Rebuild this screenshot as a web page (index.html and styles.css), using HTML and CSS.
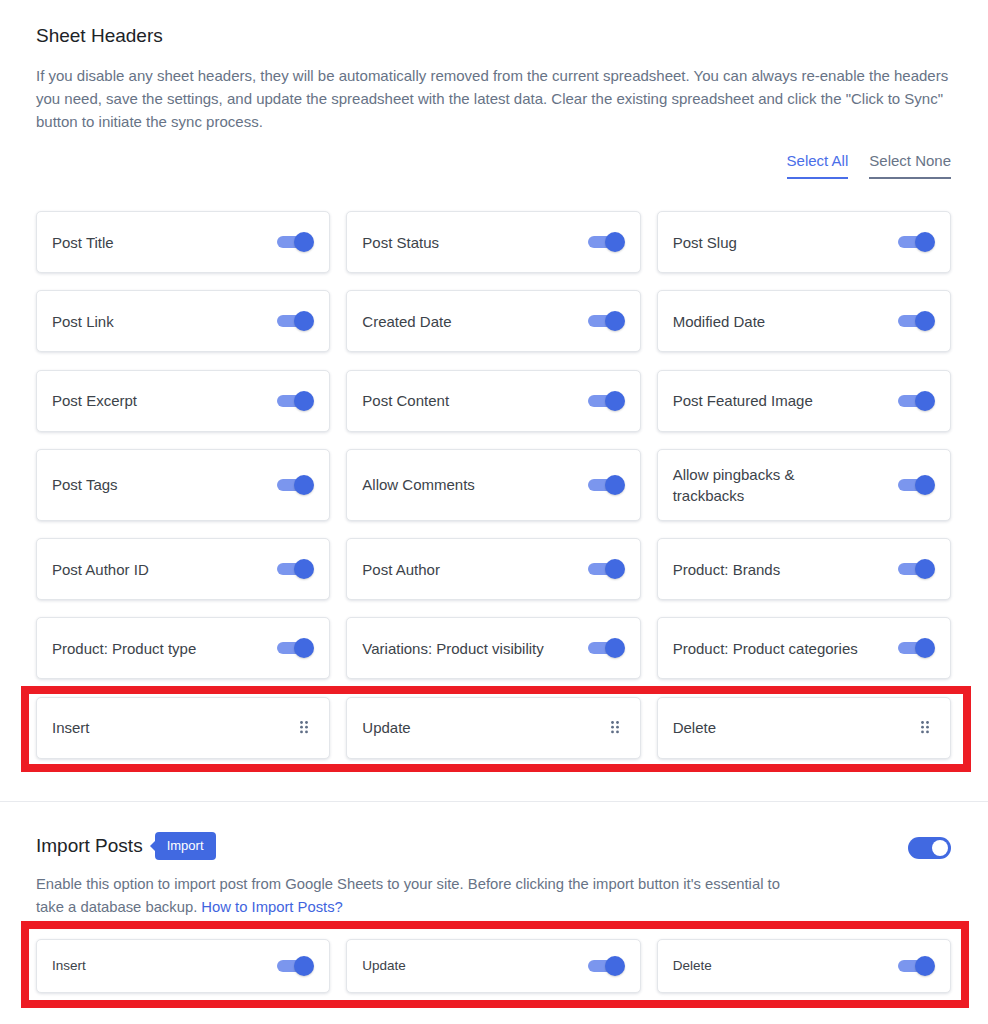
FILE: index.html
```html
<!DOCTYPE html>
<html lang="en">
<head>
<meta charset="utf-8">
<title>Sheet Headers</title>
<link rel="stylesheet" href="styles.css">
</head>
<body>
<section class="section section-headers">
  <h2 class="title">Sheet Headers</h2>
  <p class="desc">If you disable any sheet headers, they will be automatically removed from the current spreadsheet. You can always re-enable the headers you need, save the settings, and update the spreadsheet with the latest data. Clear the existing spreadsheet and click the "Click to Sync" button to initiate the sync process.</p>
  <div class="select-row">
    <a class="select-link select-all">Select All</a>
    <a class="select-link select-none">Select None</a>
  </div>
  <div class="grid">
    <div class="card"><span class="card-label">Post Title</span><span class="toggle"></span></div>
    <div class="card"><span class="card-label">Post Status</span><span class="toggle"></span></div>
    <div class="card"><span class="card-label">Post Slug</span><span class="toggle"></span></div>
    <div class="card"><span class="card-label">Post Link</span><span class="toggle"></span></div>
    <div class="card"><span class="card-label">Created Date</span><span class="toggle"></span></div>
    <div class="card"><span class="card-label">Modified Date</span><span class="toggle"></span></div>
    <div class="card"><span class="card-label">Post Excerpt</span><span class="toggle"></span></div>
    <div class="card"><span class="card-label">Post Content</span><span class="toggle"></span></div>
    <div class="card"><span class="card-label">Post Featured Image</span><span class="toggle"></span></div>
    <div class="card"><span class="card-label">Post Tags</span><span class="toggle"></span></div>
    <div class="card"><span class="card-label">Allow Comments</span><span class="toggle"></span></div>
    <div class="card"><span class="card-label">Allow pingbacks &amp; trackbacks</span><span class="toggle"></span></div>
    <div class="card"><span class="card-label">Post Author ID</span><span class="toggle"></span></div>
    <div class="card"><span class="card-label">Post Author</span><span class="toggle"></span></div>
    <div class="card"><span class="card-label">Product: Brands</span><span class="toggle"></span></div>
    <div class="card"><span class="card-label">Product: Product type</span><span class="toggle"></span></div>
    <div class="card"><span class="card-label">Variations: Product visibility</span><span class="toggle"></span></div>
    <div class="card"><span class="card-label">Product: Product categories</span><span class="toggle"></span></div>
  </div>
  <div class="grid actions highlight highlight-1">
    <div class="card"><span class="card-label">Insert</span><svg class="drag" viewBox="0 0 8 13" width="8" height="13"><circle cx="1.5" cy="1.5" r="1.4"/><circle cx="6.5" cy="1.5" r="1.4"/><circle cx="1.5" cy="6.2" r="1.4"/><circle cx="6.5" cy="6.2" r="1.4"/><circle cx="1.5" cy="10.9" r="1.4"/><circle cx="6.5" cy="10.9" r="1.4"/></svg></div>
    <div class="card"><span class="card-label">Update</span><svg class="drag" viewBox="0 0 8 13" width="8" height="13"><circle cx="1.5" cy="1.5" r="1.4"/><circle cx="6.5" cy="1.5" r="1.4"/><circle cx="1.5" cy="6.2" r="1.4"/><circle cx="6.5" cy="6.2" r="1.4"/><circle cx="1.5" cy="10.9" r="1.4"/><circle cx="6.5" cy="10.9" r="1.4"/></svg></div>
    <div class="card"><span class="card-label">Delete</span><svg class="drag" viewBox="0 0 8 13" width="8" height="13"><circle cx="1.5" cy="1.5" r="1.4"/><circle cx="6.5" cy="1.5" r="1.4"/><circle cx="1.5" cy="6.2" r="1.4"/><circle cx="6.5" cy="6.2" r="1.4"/><circle cx="1.5" cy="10.9" r="1.4"/><circle cx="6.5" cy="10.9" r="1.4"/></svg></div>
  </div>
</section>
<section class="section section-import">
  <div class="head-row">
    <div class="head-left">
      <h2 class="title">Import Posts</h2>
      <span class="badge">Import</span>
    </div>
    <span class="switch"></span>
  </div>
  <p class="desc desc-import">Enable this option to import post from Google Sheets to your site. Before clicking the import button it's essential to take a database backup. <a class="link">How to Import Posts?</a></p>
  <div class="grid import-grid highlight highlight-2">
    <div class="card card-sm"><span class="card-label">Insert</span><span class="toggle"></span></div>
    <div class="card card-sm"><span class="card-label">Update</span><span class="toggle"></span></div>
    <div class="card card-sm"><span class="card-label">Delete</span><span class="toggle"></span></div>
  </div>
</section>
</body>
</html>
```
FILE: styles.css
```css
* { box-sizing: border-box; }
body {
  margin: 0;
  background: #ffffff;
  font-family: "Liberation Sans", Arial, sans-serif;
  color: #1d2327;
}
.section {
  padding: 24px 37px 42px 36px;
}
.section-headers {
  border-bottom: 1px solid #e8eaee;
}
.section-import {
  padding-top: 30px;
}
.title {
  margin: 0;
  font-size: 19px;
  line-height: 24px;
  font-weight: 400;
  color: #1d2327;
}
.desc {
  margin: 16px 0 0;
  font-size: 15px;
  line-height: 23px;
  color: #677386;
}
.select-row {
  display: flex;
  justify-content: flex-end;
  gap: 21px;
  margin-top: 18px;
}
.select-link {
  font-size: 15px;
  line-height: 20px;
  padding-bottom: 6px;
  border-bottom: 2px solid;
  cursor: pointer;
}
.select-all { color: #4a6ee8; border-color: #4a6ee8; }
.select-none { color: #687487; border-color: #6a7690; }
.grid {
  display: grid;
  grid-template-columns: repeat(3, 1fr);
  gap: 17.3px 16px;
  margin-top: 32px;
}
.grid.actions { margin-top: 17.3px; }
.card {
  display: flex;
  align-items: center;
  justify-content: space-between;
  min-height: 62px;
  padding: 14px 15px 14px 15px;
  background: #ffffff;
  border: 1px solid #e3e6ea;
  border-radius: 5px;
  box-shadow: 0 1px 3px rgba(30, 45, 80, 0.14);
}
.card-label {
  font-size: 15px;
  line-height: 21px;
  color: #3c434a;
  max-width: 189px;
}
.toggle {
  position: relative;
  flex: none;
  width: 37px;
  height: 20px;
}
.toggle::before {
  content: "";
  position: absolute;
  left: 0;
  top: 4px;
  width: 34px;
  height: 12px;
  border-radius: 6px;
  background: #7b96ee;
}
.toggle::after {
  content: "";
  position: absolute;
  right: 0;
  top: 0;
  width: 20px;
  height: 20px;
  border-radius: 50%;
  background: #4169e1;
  box-shadow: 0 1px 2px rgba(0, 0, 0, 0.18);
}
.drag {
  flex: none;
  fill: #5f6e86;
  margin-right: 6px;
}
.highlight { position: relative; }
.highlight::after {
  content: "";
  position: absolute;
  border: 8px solid #ed1c24;
  pointer-events: none;
}
.highlight-1::after { top: -11px; bottom: -13px; left: -15px; right: -20px; }
.highlight-2::after { top: -18px; bottom: -15px; left: -15px; right: -18px; }
.head-row {
  display: flex;
  align-items: center;
  justify-content: space-between;
  height: 28px;
}
.head-left {
  display: flex;
  align-items: center;
  gap: 12px;
}
.badge {
  position: relative;
  height: 28px;
  line-height: 28px;
  padding: 0 12px;
  font-size: 13px;
  color: #ffffff;
  background: #4169e1;
  border-radius: 4px;
}
.badge::before {
  content: "";
  position: absolute;
  left: -5px;
  top: 8px;
  border-top: 6px solid transparent;
  border-bottom: 6px solid transparent;
  border-right: 6px solid #4169e1;
}
.switch {
  position: relative;
  width: 43px;
  height: 22px;
  margin-top: 5px;
  border-radius: 11px;
  background: #4169e1;
}
.switch::after {
  content: "";
  position: absolute;
  right: 3px;
  top: 3px;
  width: 16px;
  height: 16px;
  border-radius: 50%;
  background: #ffffff;
}
.desc-import {
  margin-top: 13px;
  max-width: 762px;
  font-size: 14.8px;
}
.link { color: #3f64de; cursor: pointer; }
.import-grid { margin-top: 20px; }
.card-sm {
  min-height: 54px;
  padding: 16px 15px 16px 15px;
}
.card-sm .card-label { font-size: 13.5px; line-height: 20px; }
```
